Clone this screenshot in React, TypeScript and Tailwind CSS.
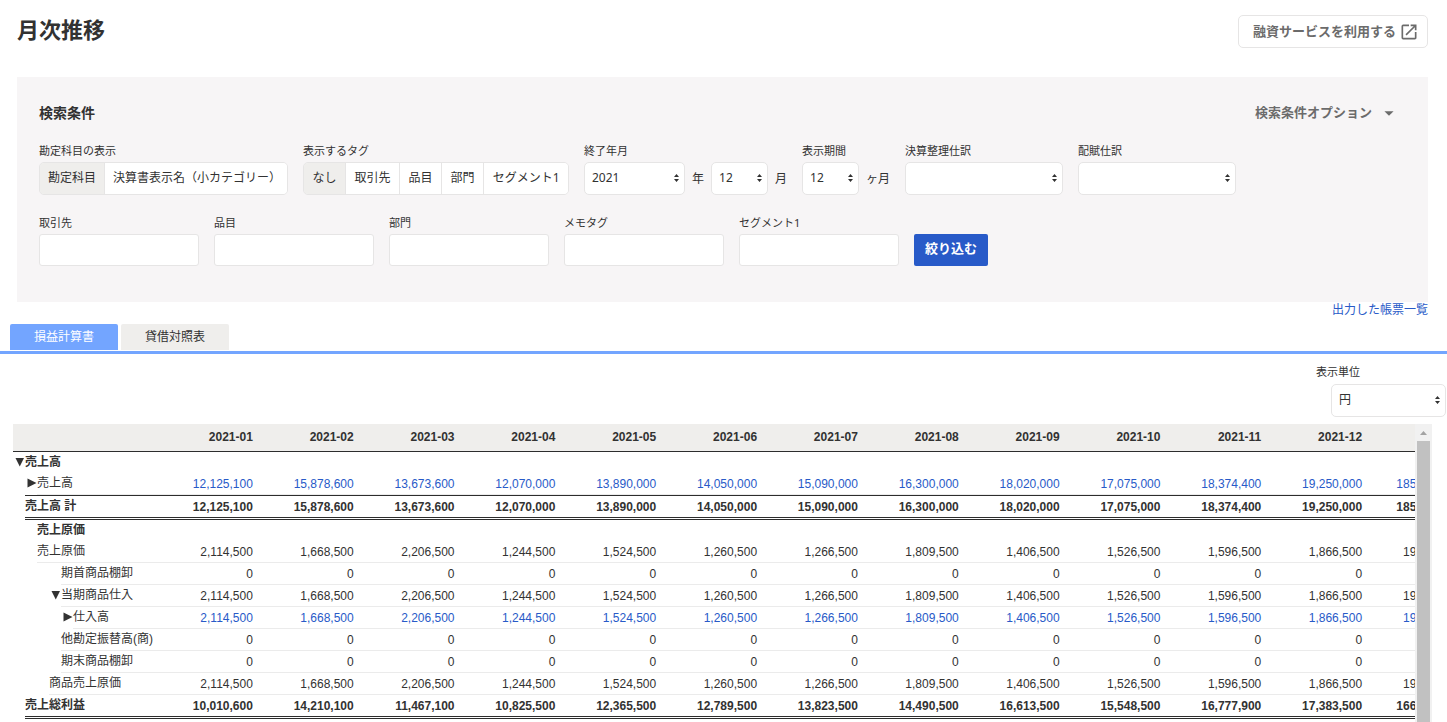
import { useState, ReactNode } from 'react'
import { MdArrowDropDown, MdOpenInNew } from 'react-icons/md'
import clsx from 'clsx'

type RowKind = 'heading' | 'plain' | 'subtotal' | 'total'

interface ReportRow {
  id: string
  label: string
  depth: number
  kind: RowKind
  values?: number[]
  linked?: boolean
  marker?: 'open' | 'closed'
}

const MONTHS = [
  '2021-01', '2021-02', '2021-03', '2021-04', '2021-05', '2021-06',
  '2021-07', '2021-08', '2021-09', '2021-10', '2021-11', '2021-12',
]

const SALES = [
  12125100, 15878600, 13673600, 12070000, 13890000, 14050000,
  15090000, 16300000, 18020000, 17075000, 18374400, 19250000,
]

const COSTS = [
  2114500, 1668500, 2206500, 1244500, 1524500, 1260500,
  1266500, 1809500, 1406500, 1526500, 1596500, 1866500,
]

const ZEROS = MONTHS.map(() => 0)
const GROSS_PROFIT = SALES.map((sales, i) => sales - COSTS[i])

const ROWS: ReportRow[] = [
  { id: 'sales-group', label: '売上高', depth: 1, kind: 'heading', marker: 'open' },
  { id: 'sales', label: '売上高', depth: 2, kind: 'plain', values: SALES, linked: true, marker: 'closed' },
  { id: 'sales-total', label: '売上高 計', depth: 1, kind: 'subtotal', values: SALES },
  { id: 'cost-group', label: '売上原価', depth: 2, kind: 'heading' },
  { id: 'cost', label: '売上原価', depth: 2, kind: 'plain', values: COSTS },
  { id: 'opening-stock', label: '期首商品棚卸', depth: 4, kind: 'plain', values: ZEROS },
  { id: 'purchases', label: '当期商品仕入', depth: 4, kind: 'plain', values: COSTS, marker: 'open' },
  { id: 'purchase-amount', label: '仕入高', depth: 5, kind: 'plain', values: COSTS, linked: true, marker: 'closed' },
  { id: 'transfer', label: '他勘定振替高(商)', depth: 4, kind: 'plain', values: ZEROS },
  { id: 'closing-stock', label: '期末商品棚卸', depth: 4, kind: 'plain', values: ZEROS },
  { id: 'goods-cost', label: '商品売上原価', depth: 3, kind: 'plain', values: COSTS },
  { id: 'gross-profit', label: '売上総利益', depth: 1, kind: 'total', values: GROSS_PROFIT },
]

const INDENT: Record<number, string> = {
  1: 'w-3',
  2: 'w-6',
  3: 'w-9',
  4: 'w-12',
  5: 'w-15',
}

const ROW_HEIGHT: Record<RowKind, string> = {
  heading: 'h-[21px]',
  plain: 'h-[22px]',
  subtotal: 'h-[25px]',
  total: 'h-6',
}

const ROW_RULE: Record<RowKind, string> = {
  heading: '',
  plain: 'border-b border-[#ebebeb]',
  subtotal: 'border-t border-b-3 border-[#2d2d2d] [border-bottom-style:double]',
  total: 'border-b-3 border-[#2d2d2d] [border-bottom-style:double]',
}

const TAG_FIELDS = ['取引先', '品目', '部門', 'メモタグ', 'セグメント1']

const sum = (values: number[]) => values.reduce((a, b) => a + b, 0)

function Marker({ state }: { state: 'open' | 'closed' }) {
  return (
    <svg viewBox="0 0 10 10" className="size-[10px] fill-current">
      {state === 'open' ? <path d="M0.5 1h8.5L4.75 9.5z" /> : <path d="M0.5 0.5v9L9.5 5z" />}
    </svg>
  )
}

interface SelectBoxProps {
  id: string
  options: string[]
  width: string
  label?: string
}

function SelectBox({ id, options, width, label }: SelectBoxProps) {
  return (
    <div className={clsx('relative', width)}>
      <select
        id={id}
        aria-label={label}
        className="block h-[33px] w-full appearance-none rounded-[5px] border border-[#e6e5e5] bg-white pb-0.5 pl-[7px] pr-4 text-xs text-[#323232]"
      >
        {options.map(option => (
          <option key={option}>{option}</option>
        ))}
      </select>
      <svg
        viewBox="0 0 5 8"
        className="pointer-events-none absolute right-1.5 top-3 h-2 w-[5px] fill-[#323232]"
      >
        <path d="M0 3L2.5 0L5 3zM0 5L2.5 8L5 5z" />
      </svg>
    </div>
  )
}

interface FieldProps {
  label: string
  htmlFor?: string
  children: ReactNode
}

function Field({ label, htmlFor, children }: FieldProps) {
  return (
    <div className="flex flex-col gap-0.5">
      {htmlFor ? (
        <label htmlFor={htmlFor} className="text-[11px] leading-[18px]">{label}</label>
      ) : (
        <span className="text-[11px] leading-[18px]">{label}</span>
      )}
      <div className="flex items-center gap-[7px]">{children}</div>
    </div>
  )
}

function Segmented({ items, label, width }: { items: string[]; label: string; width: string }) {
  const [selected, setSelected] = useState(items[0])

  return (
    <div
      role="group"
      aria-label={label}
      className={clsx('flex h-[33px] divide-x divide-[#e6e5e5] overflow-hidden rounded-[5px] border border-[#e6e5e5]', width)}
    >
      {items.map(item => (
        <button
          key={item}
          type="button"
          aria-pressed={item === selected}
          onClick={() => setSelected(item)}
          className={clsx(
            'flex-auto whitespace-nowrap px-2 pb-0.5 text-xs',
            item === selected ? 'bg-[#efeeec]' : 'bg-white'
          )}
        >
          {item}
        </button>
      ))}
    </div>
  )
}

function SearchPanel() {
  return (
    <section className="ml-[17px] mr-[19px] bg-[#f7f5f6] px-[22px] pb-9 pt-[26px]">
      <div className="flex h-5 items-center justify-between">
        <h2 className="text-sm font-bold">検索条件</h2>
        <button type="button" className="mr-1.5 flex items-center gap-1.5 text-[13px] font-bold text-[#6b6b6b]">
          検索条件オプション
          <MdArrowDropDown className="size-[22px]" />
        </button>
      </div>

      <div className="mt-[19px] flex flex-wrap gap-x-[15px] gap-y-[19px]">
        <Field label="勘定科目の表示">
          <Segmented label="勘定科目の表示" items={['勘定科目', '決算書表示名（小カテゴリー）']} width="w-[249px]" />
        </Field>
        <Field label="表示するタグ">
          <Segmented label="表示するタグ" items={['なし', '取引先', '品目', '部門', 'セグメント1']} width="w-[266px]" />
        </Field>
        <Field label="終了年月" htmlFor="end-year">
          <SelectBox id="end-year" options={['2021', '2020']} width="w-[101px]" />
          <span className="text-xs">年</span>
          <SelectBox id="end-month" label="月" options={['12', '11', '10']} width="w-[57px]" />
          <span className="text-xs">月</span>
        </Field>
        <Field label="表示期間" htmlFor="period">
          <SelectBox id="period" options={['12', '6', '3']} width="w-[57px]" />
          <span className="text-xs">ヶ月</span>
        </Field>
        <Field label="決算整理仕訳" htmlFor="closing-entry">
          <SelectBox id="closing-entry" options={['']} width="w-[158px]" />
        </Field>
        <Field label="配賦仕訳" htmlFor="allocation-entry">
          <SelectBox id="allocation-entry" options={['']} width="w-[158px]" />
        </Field>
      </div>

      <div className="mt-[19px] flex flex-wrap items-end gap-x-[15px]">
        {TAG_FIELDS.map((name, i) => (
          <Field key={name} label={name} htmlFor={`tag-${i}`}>
            <input
              id={`tag-${i}`}
              type="text"
              className="h-8 w-40 rounded-[3px] border border-[#e6e5e5] bg-white px-2 text-xs"
            />
          </Field>
        ))}
        <button type="submit" className="h-8 w-[74px] rounded-xs bg-[#285ac8] pb-0.5 text-[13px] font-bold text-white">
          絞り込む
        </button>
      </div>
    </section>
  )
}

function ReportTable() {
  return (
    <table className="w-[104%] table-fixed border-separate border-spacing-0 text-xs leading-[18px]">
      <thead>
        <tr className="bg-[#efeeec]">
          <th className="h-7 w-[147px] border-b border-[#2d2d2d]" />
          {[...MONTHS, '合計'].map(month => (
            <th key={month} scope="col" className="h-7 border-b border-[#2d2d2d] p-0 pb-0.5 pr-2 text-right font-bold">
              {month}
            </th>
          ))}
        </tr>
      </thead>
      <tbody>
        {ROWS.map(row => {
          const weight = row.kind === 'plain' ? 'font-normal' : 'font-bold'

          return (
            <tr key={row.id}>
              <th scope="row" className={clsx('p-0 text-left', weight)}>
                <div className={clsx('flex', ROW_HEIGHT[row.kind])}>
                  <span className={clsx('flex shrink-0 items-center justify-end pb-0.5', INDENT[row.depth])}>
                    {row.marker && <Marker state={row.marker} />}
                  </span>
                  <span className={clsx('flex flex-auto items-center whitespace-nowrap pb-0.5', ROW_RULE[row.kind])}>
                    {row.label}
                  </span>
                </div>
              </th>
              {row.values ? (
                [...row.values, sum(row.values)].map((value, i) => (
                  <td key={i} className={clsx('p-0', weight)}>
                    <div className={clsx('flex items-center justify-end pr-2', ROW_HEIGHT[row.kind], ROW_RULE[row.kind])}>
                      {row.linked ? (
                        <a href="#" className="text-[#285ac8]">{value.toLocaleString('en-US')}</a>
                      ) : (
                        value.toLocaleString('en-US')
                      )}
                    </div>
                  </td>
                ))
              ) : (
                <td colSpan={MONTHS.length + 1} className="p-0" />
              )}
            </tr>
          )
        })}
      </tbody>
    </table>
  )
}

export default function App() {
  return (
    <div className="flex h-screen flex-col overflow-hidden bg-white font-['Noto_Sans','Noto_Sans_CJK_JP',sans-serif] text-[#323232]">
      <header className="flex items-start justify-between pb-[29px] pl-[17px] pr-[19px] pt-[15px]">
        <h1 className="text-[22px] font-bold leading-7">月次推移</h1>
        <a
          href="#"
          className="flex h-[33px] w-[190px] items-center justify-between rounded-[5px] border border-[#e6e5e5] pl-3.5 pr-2 text-[13px] font-bold text-[#6b6b6b]"
        >
          融資サービスを利用する
          <MdOpenInNew className="size-5" />
        </a>
      </header>

      <SearchPanel />

      <div className="flex justify-end pr-[19px]">
        <a href="#" className="text-xs leading-4 text-[#285ac8]">出力した帳票一覧</a>
      </div>

      <nav className="mt-1.5 flex gap-[3px] border-b-3 border-[#73a5ff] pb-px pl-2.5 text-xs">
        <button type="button" className="h-[26px] w-[108px] rounded-t-xs bg-[#73a5ff] text-white">損益計算書</button>
        <button type="button" className="h-[26px] w-[108px] rounded-t-xs bg-[#efeeec]">貸借対照表</button>
      </nav>

      <div className="mt-[9px] flex flex-col items-end gap-[3px] pr-px">
        <label htmlFor="unit" className="w-[130px] text-[11px] leading-[18px]">表示単位</label>
        <SelectBox id="unit" options={['円', '千円']} width="w-[115px]" />
      </div>

      <main className="ml-[13px] mr-[15px] mt-[7px] flex min-h-0 flex-1">
        <div className="min-w-0 flex-1 overflow-hidden font-['Liberation_Sans','Noto_Sans_CJK_JP',sans-serif]">
          <ReportTable />
        </div>
        <div className="flex w-[17px] shrink-0 flex-col items-center bg-[#f1f1f1]">
          <svg viewBox="0 0 17 17" className="size-[17px] fill-[#a3a3a3]">
            <path d="M5 11L8.5 7L12 11z" />
          </svg>
          <div className="w-[13px] flex-1 bg-[#c1c1c1]" />
        </div>
      </main>
    </div>
  )
}
